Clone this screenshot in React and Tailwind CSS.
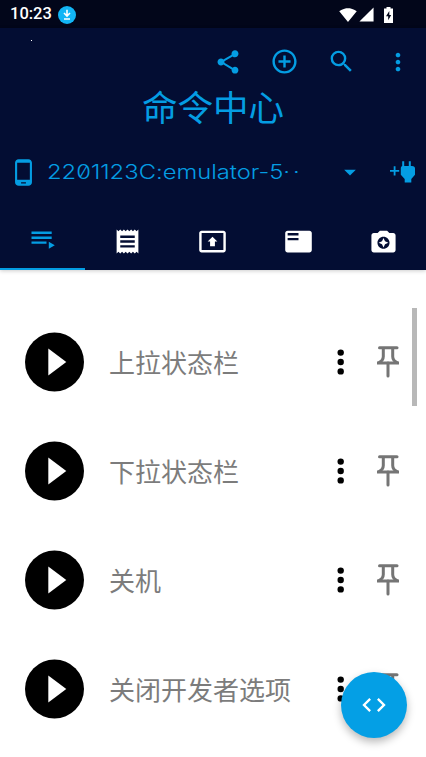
import React from 'react';
import {
  MdArrowDropDown,
  MdCameraEnhance,
  MdCode,
  MdControlPoint,
  MdFeaturedPlayList,
  MdMoreVert,
  MdPhoneAndroid,
  MdPresentToAll,
  MdReceipt,
  MdSearch,
  MdShare,
  MdSignalCellular4Bar,
  MdSignalWifi4Bar,
} from 'react-icons/md';

const commands = ['上拉状态栏', '下拉状态栏', '关机', '关闭开发者选项'];

function DownloadBadge() {
  return (
    <svg width="18" height="18" viewBox="0 0 18 18" className="ml-[6px]">
      <circle cx="9" cy="9" r="9" fill="#12b5f5" />
      <path d="M9 3.800v6M6 7l3 3 3-3M6 13h6" fill="none" stroke="#fff" strokeWidth="1.600" />
    </svg>
  );
}

function BatteryIcon() {
  return (
    <svg width="9" height="16" viewBox="0 0 9 16" className="ml-[9px]">
      <path d="M2.500 0h4v1.500H9V16H0V1.500h2.500z" fill="#fff" />
      <path d="M5.300 4L2 9.300h2.200V13.200L7.200 8H5.300z" fill="#02061a" />
    </svg>
  );
}

function PlugIcon() {
  return (
    <svg width="26" height="24" viewBox="0 0 26 24" fill="#049de3">
      <path d="M0 10h3.700V6.300h1.800V10h3.700v1.800H5.500v3.700H3.700v-3.700H0z" />
      <path d="M12.200 1.200h2V6h4.600V1.200h2V6h1.200c2 0 3 1 3 2.600v6.200l-3.700 4.200v3.500h-6.600V19l-3.900-4.200V8.600c0-1.600.8-2.200 1.400-2.600z" />
    </svg>
  );
}

function QueueIcon() {
  return (
    <svg width="28" height="28" viewBox="0 0 28 28" fill="#049de3">
      <path d="M2.500 5.500h20.200v2.500H2.500zM2.500 10.500h20.200v2.500H2.500zM2.500 15.500h15v2.200h-15zM19.800 15.800v7l6-3.500z" />
    </svg>
  );
}

function PlayIcon() {
  return (
    <svg width="60" height="60" viewBox="0 0 60 60">
      <circle cx="30.500" cy="30" r="29.500" fill="#000" />
      <path d="M24.300 16.500v27l18-13.500z" fill="#fff" />
    </svg>
  );
}

function PinIcon() {
  return (
    <svg width="24" height="34" viewBox="0 0 24 34" fill="none" stroke="#757575" strokeWidth="3">
      <path d="M3.500 2.700h17.500" strokeLinecap="round" />
      <path d="M7.300 3v8.500c0 3-1.700 5-5 6.500M16.700 3v8.500c0 3 1.700 5 5 6.500" />
      <path d="M1 18h22" />
      <path d="M12 18v13" strokeLinecap="round" />
    </svg>
  );
}

function CommandRow({ name }) {
  return (
    <li className="flex h-[109px] shrink-0 items-center">
      <PlayIcon />
      <span className="ml-[25px] flex-1 whitespace-nowrap text-[26px] text-[#7c7c7c]">{name}</span>
      <svg width="8" height="28" viewBox="0 0 8 28" className="mr-8">
        <circle cx="4.700" cy="4.600" r="3.200" />
        <circle cx="4.700" cy="14" r="3.200" />
        <circle cx="4.700" cy="23.400" r="3.200" />
      </svg>
      <PinIcon />
    </li>
  );
}

export default function App() {
  return (
    <div className="relative flex h-[757px] w-[426px] flex-col overflow-hidden bg-white font-['Noto_Sans_CJK_SC',sans-serif]">
      <div className="flex h-7 shrink-0 items-center bg-[#02061a] pt-px pl-[10px] pr-[33px] text-white">
        <span className="font-['Roboto',sans-serif] text-[16.500px] font-medium">10:23</span>
        <DownloadBadge />
        <MdSignalWifi4Bar size={18} className="ml-auto" />
        <MdSignalCellular4Bar size={17} className="ml-[1px]" />
        <BatteryIcon />
      </div>

      <header className="z-10 flex h-[242px] shrink-0 flex-col bg-[#030d33] text-[#049de3] shadow-[0_1px_4px_rgba(0,0,0,0.2)]">
        <div className="flex h-[53px] items-end justify-end gap-[28px] pr-[14.500px] pb-[5px]">
          <span className="mr-auto mb-[35px] ml-[31px] h-px w-px bg-white" />
          <MdShare size={28} />
          <MdControlPoint size={29} />
          <MdSearch size={29} />
          <MdMoreVert size={28} />
        </div>
        <h1 className="h-[51px] text-center text-[35.500px] leading-[49px]">命令中心</h1>

        <div className="flex h-20 items-center pr-[10px] pl-[9px]">
          <MdPhoneAndroid size={29} />
          <span className="ml-[9px] flex-1 origin-left scale-x-[1.220] whitespace-nowrap pt-[2px] font-['Inter',sans-serif] text-[19.500px] font-light [font-feature-settings:'zero']">
            2201123C:emulator-5<span className="tracking-[2.500px]">··</span>
          </span>
          <MdArrowDropDown size={28} className="mr-[26px]" />
          <PlugIcon />
        </div>

        <nav className="grid h-[58px] grid-cols-5 text-white">
          <div className="flex items-center justify-center border-b-2 border-[#049de3]">
            <QueueIcon />
          </div>
          <div className="flex items-center justify-center">
            <MdReceipt size={29} />
          </div>
          <div className="flex items-center justify-center">
            <MdPresentToAll size={29} />
          </div>
          <div className="flex items-center justify-center">
            <MdFeaturedPlayList size={29} />
          </div>
          <div className="flex items-center justify-center">
            <MdCameraEnhance size={29} />
          </div>
        </nav>
      </header>

      <main className="flex min-h-0 flex-1 items-start overflow-hidden pt-[37px]">
        <ul className="flex flex-1 flex-col pl-6">
          {commands.map(name => (
            <CommandRow key={name} name={name} />
          ))}
        </ul>
        <div className="mt-px mr-[9px] ml-3 h-[98px] w-[5px] bg-[#b8b8b8]" />
      </main>

      <button
        type="button"
        className="absolute right-[19px] bottom-[19px] flex size-[66px] items-center justify-center rounded-full bg-[#049fe5] text-white shadow-[0_4px_9px_rgba(0,0,0,0.28)]"
      >
        <MdCode size={28} />
      </button>
    </div>
  );
}
